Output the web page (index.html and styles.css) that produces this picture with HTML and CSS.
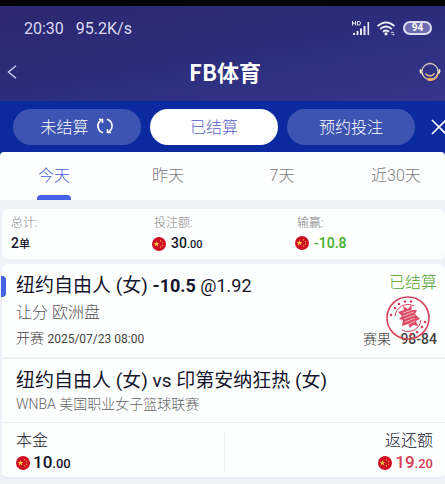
FILE: index.html
```html
<!DOCTYPE html>
<html lang="zh-CN">
<head>
  <meta charset="UTF-8">
  <meta name="viewport" content="width=device-width, initial-scale=1.0">
  <title>FB体育</title>
  <link rel="stylesheet" href="styles.css">
</head>
<body>
  <svg class="defs" aria-hidden="true">
    <symbol id="flag" viewBox="0 0 14 14">
      <circle cx="7" cy="7" r="7" fill="#cf0f25"/>
      <path d="M4.500 4.200l.8 1.900h2l-1.600 1.300.6 2.100-1.800-1.200-1.800 1.200.6-2.100-1.600-1.300h2z" fill="#f8c53a"/>
      <g fill="#f0a030">
        <circle cx="8.500" cy="3.700" r=".7"/>
        <circle cx="10.500" cy="5.600" r=".7"/>
        <circle cx="10.500" cy="8.200" r=".7"/>
        <circle cx="8.500" cy="10" r=".7"/>
      </g>
    </symbol>
  </svg>

  <header class="header">
    <div class="status-bar">
      <span>20:30</span>
      <span>95.2K/s</span>
      <div class="status-icons">
        <svg width="18" height="15" viewBox="0 0 18 15">
          <g fill="none" stroke="#e8e8f8" stroke-width="1">
            <path d="M.5 0v4.500M3.500 0v4.500M.5 2.200h3M5.500.5h1.500q1.500 0 1.500 1.700t-1.500 1.800h-1.500z"/>
          </g>
          <path d="M1 12h2v2h-2zM4.500 10h2v4h-2zM8 7.500h2v6.500h-2zM11.500 5h2v9h-2zM15.500 1h1.600v13h-1.600z" fill="#e8e8f8"/>
        </svg>
        <svg width="19" height="15" viewBox="0 0 19 15">
          <g fill="none" stroke="#eeeefa" stroke-width="1.800">
            <path d="M.5 5.200q8.500-7.600 17 0"/>
            <path d="M3.200 8q5.800-5 11.600 0"/>
            <path d="M6 10.700q3-2.500 6 0"/>
          </g>
          <circle cx="9" cy="12.800" r="1.600" fill="#eeeefa"/>
          <path d="M14 11.500h3M14 11.500l1-1M17.500 13.500h-3M17.500 13.500l-1 1" stroke="#bbbbe0" fill="none"/>
        </svg>
        <span class="battery">94</span>
      </div>
    </div>
    <div class="title-bar">
      <button class="icon-btn" aria-label="返回">
        <svg width="10" height="14" viewBox="0 0 10 14"><path d="M9 .7L1.500 7 9 13.300" fill="none" stroke="#c9cbef" stroke-width="1.500"/></svg>
      </button>
      <h1>FB体育</h1>
      <button class="icon-btn service" aria-label="客服">
        <svg width="22" height="20" viewBox="0 0 22 20" fill="none">
          <circle cx="11" cy="9.500" r="8" stroke="#d9c9b5" stroke-width="1.300"/>
          <path d="M2.500 7Q0 7 .5 9.500t2.500 2.500zM19.500 7q2.500 0 2 2.500t-2.500 2.500z" fill="#f5dfb8"/>
          <path d="M6.500 11.500q4.500 5 9 0" stroke="#efc48a" stroke-width="1.300"/>
          <path d="M19 12q-1.500 5-6 6" stroke="#efb070" stroke-width="1.300"/>
          <rect x="8.500" y="16" width="5" height="3" rx="1.500" fill="#f3ad62"/>
        </svg>
      </button>
    </div>
  </header>

  <nav class="bet-tabs">
    <button class="pill">未结算
      <svg width="18" height="18" viewBox="0 0 18 18">
        <g fill="none" stroke="#fff" stroke-width="1.600">
          <path d="M7 15.800A7 7 0 0 1 5.500 3"/>
          <path d="M11 2.200A7 7 0 0 1 12.500 15"/>
          <path d="M3 2.500h3.500v3.500M15 15.500h-3.500v-3.500"/>
        </g>
      </svg>
    </button>
    <button class="pill active">已结算</button>
    <button class="pill">预约投注</button>
    <button class="icon-btn close" aria-label="关闭">
      <svg width="14" height="16" viewBox="0 0 14 16"><path d="M1 1l14 14M15 1L1 15" stroke="#fff" stroke-width="1.600"/></svg>
    </button>
  </nav>

  <nav class="date-tabs">
    <div class="date-list">
      <button class="date active">今天</button>
      <button class="date">昨天</button>
      <button class="date">7天</button>
      <button class="date">近30天</button>
    </div>
  </nav>

  <main>
    <section class="card summary">
      <div>
        <div class="label">总计:</div>
        <div class="value"><span>2<small>单</small></span></div>
      </div>
      <div>
        <div class="label indent">投注额:</div>
        <div class="value"><svg class="flag"><use href="#flag"/></svg><span>30<small>.00</small></span></div>
      </div>
      <div>
        <div class="label indent">输赢:</div>
        <div class="value green"><svg class="flag"><use href="#flag"/></svg><span>-10.8</span></div>
      </div>
    </section>

    <article class="card bet">
      <div class="pick">
        <div>
          <h2>纽约自由人 (女) <span class="odds"><b>-10.5</b> @1.92</span></h2>
          <p class="market">让分 欧洲盘</p>
          <p class="meta">开赛 <span>2025/07/23 08:00</span></p>
        </div>
        <div class="result">
          <p class="settled">已结算</p>
          <p class="score">赛果 <span>98-84</span></p>
          <svg class="stamp" width="46" height="46" viewBox="0 0 46 46">
            <g fill="none" stroke="#d8405c">
              <circle cx="23" cy="23" r="21" stroke-width="1.600"/>
              <path d="M10 21a13 13 0 0 1 19-10M36 25a13 13 0 0 1-19 10" stroke-width="1"/>
            </g>
            <path d="M13 17l6-2-1-4 5 3 3-4 1 5 5 0-2 4 5 5-4 2 2 5-5-1-3 3-2-4-6 2 1-6-4-1 3-3z" fill="#dd4b66"/>
            <path d="M18 18l9-3M18 21l11-4M19 24l11-4M20 27l10-4M22 30l8-4" stroke="#fff" stroke-width=".6"/>
            <g fill="#d8405c">
              <circle cx="6" cy="20" r="1.300"/>
              <circle cx="10" cy="13" r="1.300"/>
              <circle cx="14" cy="9" r="1.300"/>
              <circle cx="20" cy="6.500" r="1.300"/>
              <circle cx="26" cy="6.500" r="1.300"/>
              <circle cx="40" cy="27" r="1.300"/>
              <circle cx="37" cy="32" r="1.300"/>
              <circle cx="32" cy="37" r="1.300"/>
              <circle cx="26" cy="39.500" r="1.300"/>
            </g>
          </svg>
        </div>
      </div>
      <div class="match">
        <h3>纽约自由人 (女) vs 印第安纳狂热 (女)</h3>
        <p>WNBA 美国职业女子篮球联赛</p>
      </div>
      <div class="money">
        <div class="stake">
          <div>本金</div>
          <div class="amount"><svg class="flag"><use href="#flag"/></svg><span>10<small>.00</small></span></div>
        </div>
        <div class="payout">
          <div>返还额</div>
          <div class="amount red"><svg class="flag"><use href="#flag"/></svg><span>19<small>.20</small></span></div>
        </div>
      </div>
    </article>
  </main>
</body>
</html>
```

FILE: styles.css
```css
* {
  box-sizing: border-box;
}

body {
  margin: 0;
  font-family: Roboto, "Noto Sans CJK SC", sans-serif;
  font-weight: 300;
  background: #f0f2f7;
  color: #15152b;
  overflow-x: hidden;
}

h1, h2, h3, p {
  margin: 0;
  font-weight: 400;
}

button {
  font: inherit;
  color: inherit;
  border: 0;
  padding: 0;
  background: none;
}

svg {
  display: block;
  flex: none;
}

.defs {
  position: absolute;
  width: 0;
  height: 0;
}

/* header */
.header {
  border-top: 6px solid #050507;
  background: linear-gradient(170deg, #2d2870 0%, #2b2d7c 50%, #36368a 100%);
}

.status-bar {
  display: flex;
  align-items: center;
  gap: 12px;
  height: 44px;
  padding: 0 13px 0 24px;
  font-size: 16px;
  font-weight: 400;
  color: #dcdcf4;
}

.status-icons {
  display: flex;
  align-items: center;
  gap: 7px;
  margin-left: auto;
}

.battery {
  width: 29px;
  height: 14px;
  border: 2px solid #dcdcf4;
  border-radius: 7px;
  background: #6d6cb0;
  color: #fff;
  font-size: 10px;
  font-weight: 700;
  line-height: 10px;
  text-align: center;
}

.title-bar {
  display: grid;
  grid-template-columns: 36px 1fr 34px;
  align-items: center;
  height: 51px;
  padding: 0 4px 8px 7px;
}

h1 {
  font-family: "Noto Sans CJK SC", sans-serif;
  font-size: 22px;
  font-weight: 700;
  line-height: 32px;
  padding-bottom: 2px;
  text-align: center;
  color: #fff;
}

.service {
  justify-self: end;
}

/* settled / unsettled */
.bet-tabs {
  display: grid;
  grid-template-columns: 1fr 1fr 1fr 21px;
  gap: 9px;
  padding: 8px 0 7px 13px;
  background: #0c2a9f;
}

.pill {
  display: flex;
  align-items: center;
  justify-content: center;
  gap: 7px;
  height: 36px;
  padding-bottom: 2px;
  border-radius: 18px;
  background: #3d54b2;
  color: #fff;
  font-size: 16px;
}

.pill.active {
  background: #fff;
  color: #5560c4;
}

.close {
  justify-self: end;
}

/* date filter */
.date-tabs {
  overflow: hidden;
  background: #fdfefe;
  border-radius: 4px 4px 0 0;
  box-shadow: 0 -4px 0 #0c2a9f;
}

.date-list {
  display: grid;
  grid-template-columns: repeat(4, 1fr);
  margin: 0 -8px 0 -3px;
}

.date {
  display: flex;
  flex-direction: column;
  align-items: center;
  height: 48px;
  padding-top: 12px;
  font-size: 16px;
  line-height: 24px;
  color: #7c7c7c;
}

.date.active {
  color: #4a5cd8;
}

.date.active::after {
  content: "";
  width: 34px;
  height: 5px;
  margin-top: auto;
  border-radius: 4px 4px 0 0;
  background: #4460e6;
}

/* cards */
main {
  padding: 9px 0 7px 2px;
}

.card {
  background: #fdfefe;
  border-radius: 6px;
}

.flag {
  width: 14px;
  height: 14px;
}

.summary {
  display: grid;
  grid-template-columns: 141px 143px 1fr;
  height: 50px;
  padding: 5px 9px;
  margin-bottom: 5px;
}

.label {
  font-size: 12px;
  line-height: 18px;
  color: #858585;
}

.label.indent {
  padding-left: 2px;
}

.value {
  display: flex;
  align-items: center;
  gap: 5px;
  font-size: 14px;
  font-weight: 500;
  line-height: 22px;
}

.value small {
  font-size: 11px;
}

.green {
  color: #42b029;
}

.bet {
  border-bottom: 2px solid #e8ecef;
}

.pick {
  position: relative;
  display: flex;
  justify-content: space-between;
  height: 95px;
  padding: 8px 8px 0 14px;
  border-bottom: 2px solid #eef1f2;
}

/* marker on the card edge */
.pick::before {
  content: "";
  position: absolute;
  left: -1px;
  top: 12px;
  width: 5px;
  height: 21px;
  border-radius: 0 4px 4px 0;
  background: #4460e6;
}

h2, h3 {
  font-size: 19px;
  line-height: 28px;
}

.odds {
  font-size: 18px;
}

.odds b {
  font-weight: 700;
}

.market {
  font-size: 16px;
  font-weight: 300;
  line-height: 26px;
  color: #555;
}

.meta, .score {
  font-size: 14px;
  font-weight: 300;
  line-height: 24px;
  color: #444;
}

.meta span {
  font-size: 12px;
  font-weight: 400;
}

.result {
  position: relative;
  display: flex;
  flex-direction: column;
  justify-content: space-between;
  align-items: flex-end;
  padding-bottom: 6px;
}

.settled {
  font-size: 16px;
  line-height: 22px;
  font-weight: 300;
  color: #4fa32e;
}

.score span {
  margin-left: 6px;
  font-weight: 500;
}

.stamp {
  position: absolute;
  right: 6px;
  top: 23px;
}

.match {
  padding: 8px 14px 8px;
  height: 64px;
  border-bottom: 1px solid #eceeef;
}

.match p {
  font-size: 14px;
  line-height: 18px;
  font-weight: 300;
  color: #666;
}

.money {
  display: flex;
  height: 54px;
  padding: 8px 12px 4px 14px;
  font-size: 16px;
  line-height: 20px;
}

.stake, .payout {
  flex: 1;
}

.stake {
  border-right: 1px solid #eceeef;
}

.payout {
  text-align: right;
}

.amount {
  display: flex;
  align-items: center;
  gap: 3px;
  font-size: 17px;
  font-weight: 500;
  line-height: 22px;
}

.amount small {
  font-size: 13px;
}

.payout .amount {
  justify-content: flex-end;
}

.red {
  color: #d83a58;
}
```
